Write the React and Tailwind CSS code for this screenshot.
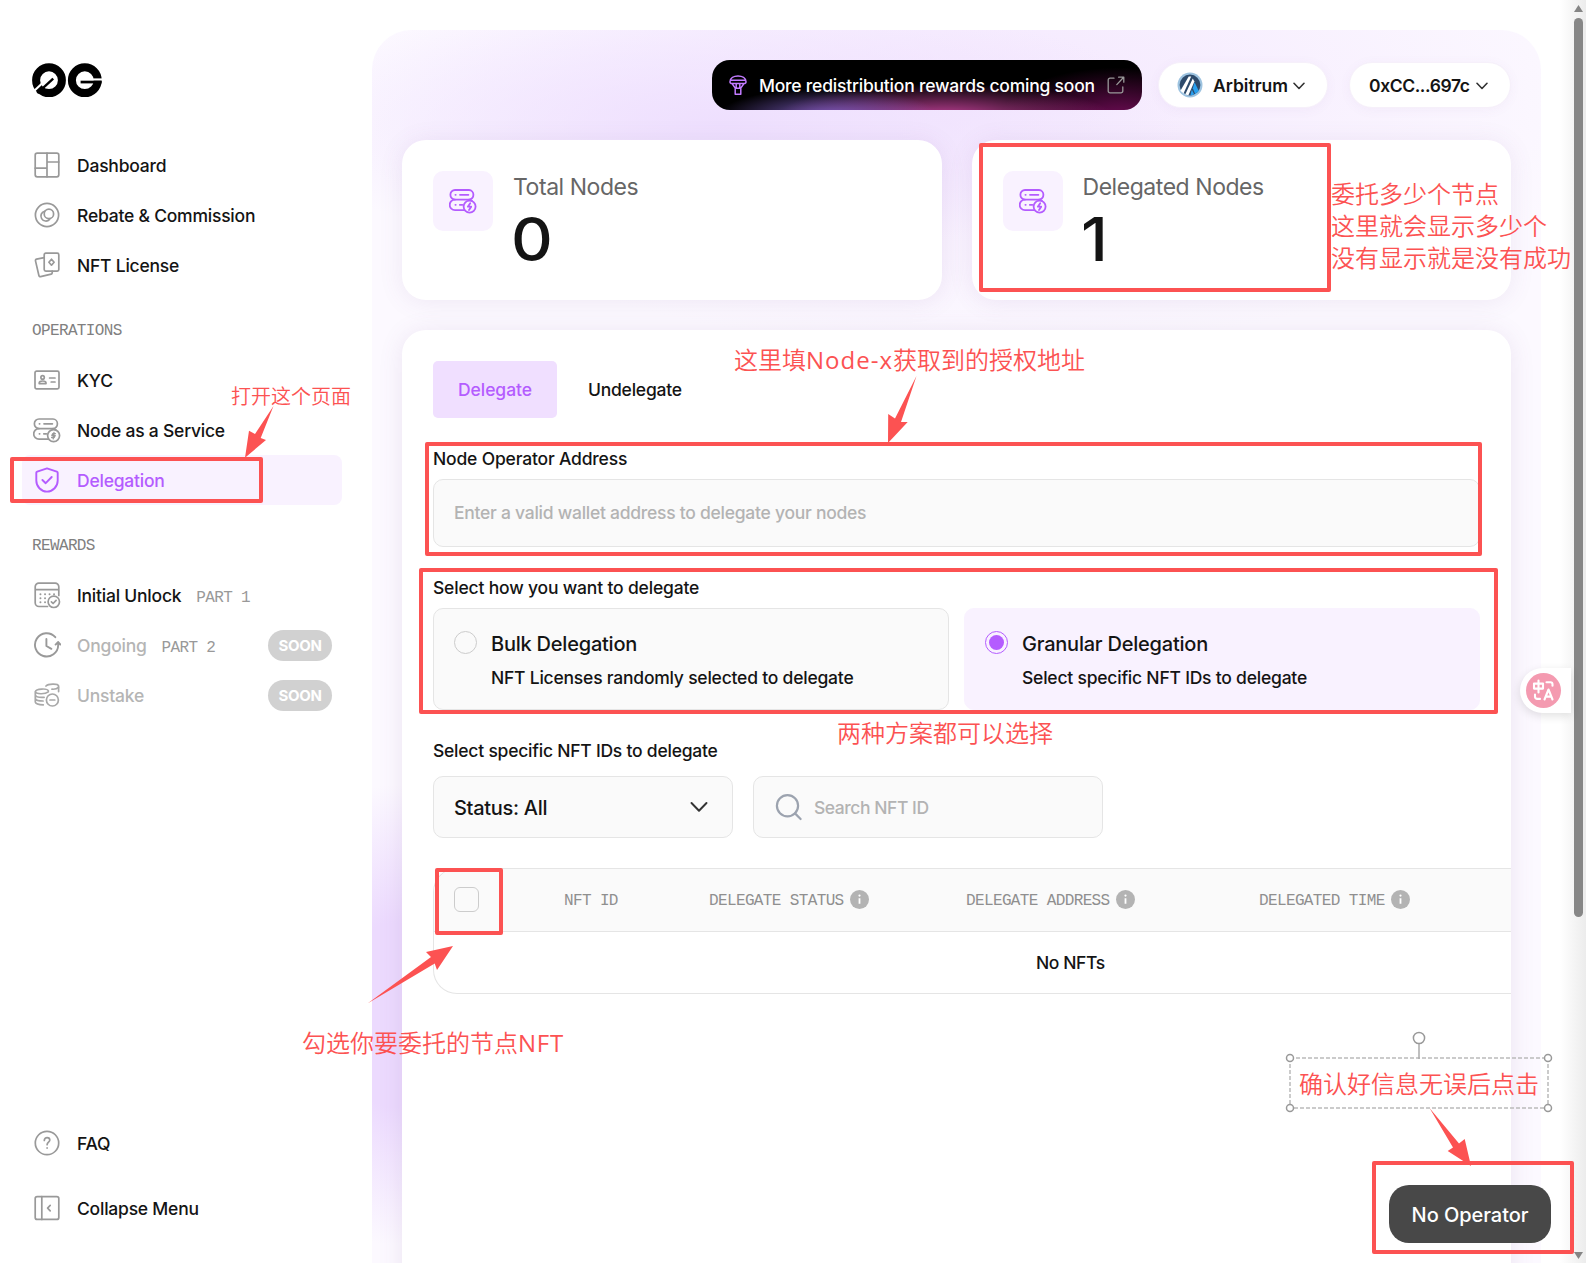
import React from "react";

const sv = { fill: "none", stroke: "currentColor", strokeWidth: 1.7, strokeLinecap: "round", strokeLinejoin: "round" };

function Logo() {
  return (
    <svg width="70" height="35" viewBox="0 0 70 35" className="block">
      <circle cx="17" cy="17.2" r="12.9" fill="none" stroke="#000" strokeWidth="8" />
      <path d="M1 29 10 20.400" stroke="#fff" strokeWidth="2.100" />
      <path d="M5.400 30.200 21.200 15.600" stroke="#000" strokeWidth="2.400" />
      <circle cx="52.8" cy="17.2" r="12.9" fill="none" stroke="#000" strokeWidth="8" />
      <rect x="61" y="15.400" width="9" height="2.300" fill="#fff" />
      <rect x="48.600" y="17.700" width="21" height="2.700" fill="#000" />
    </svg>
  );
}

function DashboardIcon() {
  return (
    <svg width="28" height="28" viewBox="0 0 28 28" {...sv}>
      <rect x="2.2" y="2.2" width="23.6" height="23.6" rx="2" />
      <path d="M14 2.2v23.6M2.2 17.2H14M14 11h11.8" />
    </svg>
  );
}
function RebateIcon() {
  return (
    <svg width="28" height="28" viewBox="0 0 28 28" {...sv}>
      <circle cx="14" cy="14" r="11.6" />
      <circle cx="15.9" cy="12.9" r="4.7" />
      <path d="M11.6 10.2a5 5 0 1 0 5 8.2" />
    </svg>
  );
}
function NftIcon() {
  return (
    <svg width="28" height="28" viewBox="0 0 28 28" {...sv}>
      <rect x="11.2" y="2.2" width="14.6" height="18" rx="1.6" />
      <path d="M11.2 6.6 3.6 8.2a1.4 1.4 0 0 0-1.1 1.7l3.4 14.6a1.4 1.4 0 0 0 1.7 1.1l10.6-2.5a1.3 1.3 0 0 0 1-1.3v-1.6" />
      <path d="M18.5 8.2l2.6 3-2.6 3-2.6-3z" />
    </svg>
  );
}
function KycIcon() {
  return (
    <svg width="28" height="28" viewBox="0 0 28 28" {...sv}>
      <rect x="2" y="5.2" width="24" height="17.6" rx="1.6" />
      <circle cx="9.6" cy="11.4" r="1.7" />
      <path d="M6.2 17.6v-.6c0-1.2 1.2-2 3.4-2s3.4.8 3.4 2v.6zM16.6 12h5.4M18.2 16h3.8" />
    </svg>
  );
}
function NodesIcon({ size = 28, bolt = false, w = 1.7 }) {
  return (
    <svg width={size} height={size} viewBox="0 0 28 28" {...sv} strokeWidth={w}>
      <path d="M6 12.6h14a4.6 4.6 0 0 0 4.4-4.8A4.7 4.7 0 0 0 20 3H6a4.7 4.7 0 0 0-4.6 4.8A4.6 4.6 0 0 0 6 12.6z" />
      <path d="M6 12.6a5.3 5.3 0 0 0 0 10.6h9.2M20 12.6c1.2.2 2 .5 2.8 1.2" />
      <path d="M6.4 7.8h.3M11 7.8h8.4M6.4 17.8h.3M10.8 17.8h2.6" />
      <circle cx="20.6" cy="19.6" r="6" />
      {bolt ? <path d="M21.2 16.2l-2.4 3.5h3.4l-2.2 3.4" /> : <path d="M22.4 17.6h-2.6l-1 1.9h3.4l-1 2h-2.6M21 16.4l-.8 6.4" strokeWidth="1.3" />}
    </svg>
  );
}
function ShieldIcon() {
  return (
    <svg width="28" height="28" viewBox="0 0 28 28" {...sv} strokeWidth="1.9">
      <path d="M14 2.4 23.8 5.6c.6.2.9.6.9 1.2v7.6c0 6-4.7 11.2-10.7 11.2S3.3 20.4 3.3 14.4V6.8c0-.6.3-1 .9-1.2z" />
      <path d="M9.4 14l3.3 3.2 6-6.2" />
    </svg>
  );
}
function CalendarIcon() {
  return (
    <svg width="28" height="28" viewBox="0 0 28 28" {...sv}>
      <path d="M14.5 25.500H6a3.800 3.800 0 0 1-3.800-3.800V5.800A3.600 3.600 0 0 1 6 2.200h16a3.600 3.600 0 0 1 3.800 3.600v8.600M2.200 8.600h23.600" />
      <path d="M7.400 13.300h.1M12 13.300h.1M16.500 13.300h.1M21 13.300h.1M7.400 17.300h.1M12 17.300h.1M7.400 21.300h.1M12 21.300h.1" strokeWidth="1.900" />
      <circle cx="20.800" cy="20.800" r="5.700" />
      <path d="M18.400 20.900l1.700 1.600 3-3.100" />
    </svg>
  );
}
function OngoingIcon() {
  return (
    <svg width="28" height="28" viewBox="0 0 28 28" {...sv} stroke="#999" strokeWidth="1.9">
      <path d="M22.300 6.200A11.600 11.600 0 1 0 25.200 14v-2.400M22.600 13.600l2.600-2.600 2.200 2.600" />
      <path d="M13.400 8v7l5 2.800" />
    </svg>
  );
}
function UnstakeIcon() {
  return (
    <svg width="28" height="28" viewBox="0 0 28 28" {...sv}>
      <path d="M13 5c2-2.200 12-2.600 12.600 0v5.600" />
      <path d="M2.300 10.600C3 7.600 14.500 7 15.400 10M2.300 10.600c.6 2.600 9.600 3 13 .2M19 8.200c3 .2 5.400-.6 6.400-1.800M2.300 10.600V21c.4 1.800 3.600 2.800 8 2.800M2.500 14.200c.5 1.500 4 2.400 8.600 2.100M2.500 17.700c.5 1.500 3.600 2.300 7.600 2.300" />
      <circle cx="19.400" cy="19" r="6" />
      <path d="M17 19h4.800" />
    </svg>
  );
}
function FaqIcon() {
  return (
    <svg width="28" height="28" viewBox="0 0 28 28" {...sv}>
      <circle cx="14" cy="14" r="11.700" />
      <path d="M11.300 11.400c0-1.700 1.200-2.800 2.800-2.800s2.700 1 2.700 2.500c0 2-2.700 2.200-2.700 4.600M14.100 18.900v.2" />
    </svg>
  );
}
function CollapseIcon() {
  return (
    <svg width="28" height="28" viewBox="0 0 28 28" {...sv}>
      <rect x="2.200" y="2.600" width="23.600" height="22.800" rx="2" />
      <path d="M8.800 2.600v22.800M17.200 11.400l-2.600 2.700 2.600 2.700" />
    </svg>
  );
}
function Chevron({ w = 12, h = 8, sw = 1.6 }) {
  return (
    <svg width={w} height={h} viewBox="0 0 12 8" fill="none" stroke="#333" strokeWidth={sw} strokeLinecap="round" strokeLinejoin="round" className="block shrink-0">
      <path d="M1 1.300 6 6.500 11 1.300" />
    </svg>
  );
}
function BalloonIcon() {
  return (
    <svg width="20" height="22" viewBox="0 0 20 22" fill="none" stroke="#c27bff" strokeWidth="1.500" strokeLinejoin="round" strokeLinecap="round" className="block shrink-0">
      <path d="M2 7.800C2.200 4 5.800 2 10 2s7.800 2 8 5.800c.1 1.300-1 1.800-2 1.800H4c-1 0-2.100-.5-2-1.800zM2.600 6.200h14.800M4 9.600l3.400 4.600M16 9.600l-3.400 4.600M8.200 9.600v4.600M11.800 9.600v4.600M7.200 14.200h5.600v6H7.200z" />
    </svg>
  );
}
function ExternalIcon() {
  return (
    <svg width="18" height="18" viewBox="0 0 18 18" fill="none" stroke="#999" strokeWidth="1.300" strokeLinecap="round" strokeLinejoin="round" className="block shrink-0">
      <path d="M7 2.200H3A1.800 1.800 0 0 0 1.200 4v11A1.800 1.800 0 0 0 3 16.800h11a1.800 1.800 0 0 0 1.800-1.800v-4M11.600 1.200h5.200v5M16.400 1.500 9.800 8.600" />
    </svg>
  );
}
function ArbitrumIcon() {
  return (
    <svg width="26" height="26" viewBox="0 0 26 26" className="block shrink-0">
      <circle cx="13" cy="13" r="12.500" fill="#9dc3e0" />
      <circle cx="13" cy="13" r="10.400" fill="#2d4a6b" />
      <path d="M11.700 4.500h2.500L6.500 21.400 3.400 18.800z" fill="#fff" />
      <path d="M15.800 6.400l1.600 3.200L11.400 23.200l-3.200-.8z" fill="#fff" />
      <path d="M17.600 10.200l4.200 8.700-3.600 3.100-2.400-5.800z" fill="#28a0f0" />
      <path d="M14.800 17.500l2.400 5-3.800.9z" fill="#28a0f0" />
    </svg>
  );
}

function NavItem({ icon, label, part, soon, active, muted }) {
  const tone = active ? "text-[#b45cff]" : muted ? "text-[#b5b5b5]" : "text-[#141414]";
  return (
    <div className={"flex h-[50px] w-80 items-center rounded-lg pl-[11px] pr-2.5 " + (active ? "bg-[#f9f2ff]" : "")}>
      <span className={"w-7 " + (active ? "text-[#b45cff]" : muted ? "text-[#a8a8a8]" : "text-[#999]")}>{icon}</span>
      <span className={"ml-4 whitespace-nowrap pt-0.5 text-[17.5px] font-medium tracking-[-0.22px] " + tone}>{label}</span>
      {part && <span className="ml-[15px] whitespace-pre pt-[5px] font-['Liberation_Mono'] text-[16px] tracking-[-0.65px] text-[#999]">{part}</span>}
      {soon && <span className="ml-auto flex h-[31px] w-16 items-center justify-center rounded-full bg-[#d1d1d1] pt-0.5 text-[15px] font-bold tracking-[-0.3px] text-white">SOON</span>}
    </div>
  );
}

function GroupLabel({ children }) {
  return <div className="h-[65px] pl-2.5 pt-[30px] font-['Liberation_Mono'] text-[16px] leading-[22px] tracking-[-0.63px] text-[#808080]">{children}</div>;
}

function Sidebar() {
  return (
    <aside className="flex w-[372px] shrink-0 flex-col pl-[22px] pt-[63px]">
      <div className="h-[77px] pl-2.5"><Logo /></div>
      <NavItem icon={<DashboardIcon />} label="Dashboard" />
      <NavItem icon={<RebateIcon />} label="Rebate & Commission" />
      <NavItem icon={<NftIcon />} label="NFT License" />
      <GroupLabel>OPERATIONS</GroupLabel>
      <NavItem icon={<KycIcon />} label="KYC" />
      <NavItem icon={<NodesIcon />} label="Node as a Service" />
      <NavItem icon={<ShieldIcon />} label="Delegation" active />
      <GroupLabel>REWARDS</GroupLabel>
      <NavItem icon={<CalendarIcon />} label="Initial Unlock" part="PART 1" />
      <NavItem icon={<OngoingIcon />} label="Ongoing" part="PART 2" soon muted />
      <NavItem icon={<UnstakeIcon />} label="Unstake" soon muted />
      <div className="mb-[30px] mt-auto flex flex-col gap-[15px]">
        <NavItem icon={<FaqIcon />} label="FAQ" />
        <NavItem icon={<CollapseIcon />} label="Collapse Menu" />
      </div>
    </aside>
  );
}

function TopBar() {
  return (
    <div className="flex h-[50px] items-center">
      <div className="ml-auto flex h-[50px] w-[430px] items-center rounded-[18px] bg-black bg-[radial-gradient(ellipse_110px_28px_at_27%_112%,#8f6be0cc,transparent),radial-gradient(ellipse_170px_34px_at_54%_115%,#e04bb0dd,transparent),radial-gradient(ellipse_120px_50px_at_95%_115%,#8a0f6acc,transparent)] pl-4">
        <BalloonIcon />
        <span className="ml-[11px] w-[337px] whitespace-nowrap pt-0.5 text-[17.5px] font-medium tracking-[-0.21px] text-white">More redistribution rewards coming soon</span>
        <span className="ml-[11px]"><ExternalIcon /></span>
      </div>
      <div className="ml-4 flex h-[46px] w-[170px] items-center rounded-full border border-[#f6f0fa] bg-white pl-[18px] shadow-[0_2px_12px_rgba(120,80,150,0.05)]">
        <ArbitrumIcon />
        <span className="ml-2.5 w-[76px] whitespace-nowrap pt-0.5 text-[17.5px] font-semibold text-[#141414]">Arbitrum</span>
        <span className="ml-1 pt-0.5"><Chevron /></span>
      </div>
      <div className="ml-[21px] flex h-[46px] w-[162px] items-center rounded-full border border-[#f6f0fa] bg-white pl-[19px] shadow-[0_2px_12px_rgba(120,80,150,0.05)]">
        <span className="w-[102px] whitespace-nowrap pt-0.5 text-[17.5px] font-semibold tracking-[-0.4px] text-[#141414]">0xCC...697c</span>
        <span className="ml-[5px] pt-0.5"><Chevron /></span>
      </div>
    </div>
  );
}

function StatCard({ label, value }) {
  return (
    <div className="flex h-40 flex-1 rounded-3xl bg-white pl-[31px] pt-[31px] shadow-[0_2px_24px_rgba(120,80,150,0.10)]">
      <div className="flex size-[60px] items-center justify-center rounded-[10px] bg-[#f9f2ff] text-[#b45cff]">
        <NodesIcon size={28} bolt w={1.8} />
      </div>
      <div className="ml-5">
        <div className="h-8 whitespace-nowrap text-[23px] leading-8 tracking-[-0.45px] text-[#666]">{label}</div>
        <div className="-ml-0.5 origin-left scale-x-108 text-[60px] font-medium leading-[72px] text-[#141414]">{value}</div>
      </div>
    </div>
  );
}

function Option({ title, text, checked }) {
  return (
    <div className={"flex h-[102px] flex-1 rounded-[10px] border pl-5 " + (checked ? "border-[#f9f2ff] bg-[#f9f2ff]" : "border-[#e5e5e5] bg-[#fafafa]")}>
      <div className={"mt-[22px] flex size-[23px] items-center justify-center rounded-full border " + (checked ? "border-[#b45cff]" : "border-[#ccc]")}>
        {checked && <div className="size-[15px] rounded-full bg-[#b45cff]" />}
      </div>
      <div className="ml-3.5 pt-5 text-[#141414]">
        <div className="h-[30px] whitespace-nowrap text-[20px] font-medium leading-[30px] tracking-[-0.22px]">{title}</div>
        <div className="mt-[7px] whitespace-nowrap text-[17.5px] font-medium leading-6 tracking-[-0.22px]">{text}</div>
      </div>
    </div>
  );
}

function Info() {
  return (
    <svg width="19" height="19" viewBox="0 0 19 19" className="block">
      <circle cx="9.500" cy="9.500" r="9.500" fill="#b3b3b3" />
      <path d="M9.500 8.200v5.600" stroke="#fff" strokeWidth="1.800" />
      <circle cx="9.500" cy="5.600" r="1.100" fill="#fff" />
    </svg>
  );
}

function Column({ label, width }) {
  return (
    <div className={"flex shrink-0 items-center gap-1.5 whitespace-pre " + width}>
      <span className="pt-0.5">{label}</span>
      {label !== "NFT ID" && <Info />}
    </div>
  );
}

function DelegateCard() {
  const label = "whitespace-nowrap text-[17.5px] font-medium leading-6 tracking-[-0.18px] text-[#141414]";
  return (
    <div className="mt-[30px] h-[960px] overflow-hidden rounded-t-3xl bg-white pl-[31px] pt-[31px] shadow-[0_2px_24px_rgba(120,80,150,0.12)]">
      <div className="flex h-[57px] items-center text-[17.5px] font-medium tracking-[-0.05px]">
        <div className="flex h-full w-[124px] items-center justify-center rounded-[5px] bg-[#f0dfff] pt-0.5 text-[#b45cff]">Delegate</div>
        <div className="ml-[31px] pt-0.5 tracking-[-0.23px] text-[#141414]">Undelegate</div>
      </div>
      <div className={"mt-[29px] " + label}>Node Operator Address</div>
      <div className="mr-[31px] mt-2 flex h-[68px] items-center rounded-[10px] border border-[#e5e5e5] bg-[#fafafa] pl-5 text-[17.5px] font-medium tracking-[-0.26px] text-[#b3b3b3]">Enter a valid wallet address to delegate your nodes</div>
      <div className={"mt-[29px] " + label}>Select how you want to delegate</div>
      <div className="mr-[31px] mt-2 flex gap-[15px]">
        <Option title="Bulk Delegation" text="NFT Licenses randomly selected to delegate" />
        <Option title="Granular Delegation" text="Select specific NFT IDs to delegate" checked />
      </div>
      <div className="mt-[29px] whitespace-nowrap text-[17.5px] font-medium leading-6 tracking-[-0.23px] text-[#141414]">Select specific NFT IDs to delegate</div>
      <div className="mt-[13px] flex gap-5">
        <div className="flex h-[62px] w-[300px] items-center justify-between rounded-[10px] border border-[#e5e5e5] bg-[#fafafa] pl-5 pr-6 text-[20px] font-medium tracking-[-0.3px] text-[#141414]">
          <span className="pt-0.5">Status: All</span>
          <Chevron w={18} h={12} sw={1.3} />
        </div>
        <div className="flex h-[62px] w-[350px] items-center rounded-[10px] border border-[#e5e5e5] bg-[#fafafa] pl-[21px] text-[17.5px] font-medium tracking-[-0.45px] text-[#b3b3b3]">
          <svg width="28" height="28" viewBox="0 0 28 28" fill="none" stroke="#9ca3af" strokeWidth="2.200" strokeLinecap="round" className="mr-[11px]">
            <circle cx="12.500" cy="12.800" r="10.600" />
            <path d="M20 20.400l5.600 5.600" />
          </svg>
          <span className="pt-0.5">Search NFT ID</span>
        </div>
      </div>
      <div className="mt-[30px] h-[126px] overflow-hidden rounded-l-3xl border-y border-l border-[#e5e5e5]">
        <div className="flex h-[63px] items-center border-b border-[#e5e5e5] bg-[#fafafa] pl-5 font-['Liberation_Mono'] text-[16px] tracking-[-0.63px] text-[#8f8f8f]">
          <div className="mb-0.5 size-[25px] rounded-md border border-[#ccc]" />
          <div className="flex pb-px pl-[85px]">
            <Column label="NFT ID" width="w-[145px]" />
            <Column label="DELEGATE STATUS" width="w-[257px]" />
            <Column label="DELEGATE ADDRESS" width="w-[293px]" />
            <Column label="DELEGATED TIME" width="w-[250px]" />
          </div>
        </div>
        <div className="flex h-[61px] items-center pl-[602px] pt-0.5 text-[17.5px] font-medium tracking-[-0.4px] text-[#141414]">No NFTs</div>
      </div>
    </div>
  );
}

const note = "absolute whitespace-nowrap font-['Noto_Sans_CJK_SC',sans-serif] font-[350] text-[#fc5252]";
const box = "absolute rounded-[2px] border-4 border-[#fc5252]";

function Annotations() {
  return (
    <div className="pointer-events-none absolute inset-0">
      <div className={box + " left-[10px] top-[457px] h-[46px] w-[253px]"} />
      <div className={box + " left-[979px] top-[143px] h-[149px] w-[352px]"} />
      <div className={box + " left-[425px] top-[442px] h-[114px] w-[1057px]"} />
      <div className={box + " left-[419px] top-[568px] h-[146px] w-[1079px]"} />
      <div className={box + " left-[435px] top-[868px] h-[67px] w-[68px]"} />
      <div className={box + " left-[1372px] top-[1161px] h-[93px] w-[202px]"} />
      <div className={note + " left-[231px] top-[382px] text-[20px] leading-7"}>打开这个页面</div>
      <div className={note + " left-[1331px] top-[177px] text-[24px] leading-8"}>委托多少个节点<br />这里就会显示多少个<br />没有显示就是没有成功</div>
      <div className={note + " left-[734px] top-[343px] text-[24px] leading-8"}>这里填<span className="font-['Open_Sans'] font-normal tracking-[1px]">Node-x</span>获取到的授权地址</div>
      <div className={note + " left-[837px] top-[716px] text-[24px] leading-8"}>两种方案都可以选择</div>
      <div className={note + " left-[302px] top-[1026px] text-[24px] leading-8"}>勾选你要委托的节点<span className="font-['Open_Sans'] font-normal tracking-[0.8px]">NFT</span></div>
      <div className={note + " left-[1299px] top-[1067px] text-[24px] leading-8"}>确认好信息无误后点击</div>
      <svg width="1586" height="1263" viewBox="0 0 1586 1263" className="absolute left-0 top-0">
        <g fill="#fc5252">
          <path d="M273.500 406 255 434l-6-3.300-4 27L266 440l-5.300-2z" />
          <path d="M916.500 376 895 418.500l-6.800-4.500-.2 29 19.700-21-6.700 0z" />
          <path d="M367.500 1003.500 431 957l-5-5 27-6-16 24-2.300-6.500z" />
          <path d="M1429.500 1108 1459 1143.500l5.700-4.500 6.300 27-23.300-15 5.300-3.500z" />
        </g>
        <g fill="none" stroke="#999" strokeWidth="1.500">
          <rect x="1290" y="1058" width="258" height="50" stroke="#bbb" strokeDasharray="4 2" />
          <path d="M1419 1044v15" stroke="#aaa" />
          <g fill="#fff">
            <circle cx="1419" cy="1038" r="5.600" />
            <circle cx="1290" cy="1058" r="3.500" />
            <circle cx="1548" cy="1058" r="3.500" />
            <circle cx="1290" cy="1108" r="3.500" />
            <circle cx="1548" cy="1108" r="3.500" />
          </g>
        </g>
      </svg>
    </div>
  );
}

function TranslateWidget() {
  return (
    <div className="absolute left-[1520px] top-[668px] flex h-[45px] w-[51px] items-center rounded-l-full bg-white pl-1.5 shadow-[0_3px_10px_rgba(0,0,0,0.12)]">
      <div className="flex size-[35px] items-center justify-center rounded-full bg-[#f49ab0]">
        <svg width="23" height="23" viewBox="0 0 23 23" fill="none" stroke="#fff" strokeWidth="2.100" strokeLinecap="round" strokeLinejoin="round">
          <path d="M2 4.600h9v5H2zM6.500 1.500v12M14.500 3.300h4a2 2 0 0 1 2 2v1.500M3 15.500v2.200a2.200 2.200 0 0 0 2.200 2.200H8M12.500 20.500 16.500 10.500l4 10M13.800 17.600h5.400" />
        </svg>
      </div>
    </div>
  );
}

export default function App() {
  return (
    <div className="relative flex h-[1263px] w-[1586px] overflow-hidden bg-white font-[Inter,sans-serif]">
      <Sidebar />
      <main className="mt-[30px] w-[1169px] shrink-0 overflow-hidden rounded-t-[40px] bg-[#fcf9ff] bg-[radial-gradient(ellipse_460px_130px_at_30%_95px,#eedffe,transparent),radial-gradient(ellipse_640px_260px_at_52%_60px,#f4e8fe,transparent),radial-gradient(ellipse_130px_230px_at_20px_985px,#ecdafe_40%,transparent)] px-[30px] pt-[30px]">
        <TopBar />
        <div className="mt-[30px] flex gap-[30px]">
          <StatCard label="Total Nodes" value="0" />
          <StatCard label="Delegated Nodes" value="1" />
        </div>
        <DelegateCard />
      </main>
      <div className="ml-auto flex w-[26px] flex-col items-end bg-gradient-to-r from-white to-[#ececec] pr-[3px] pt-[5px]">
        <svg width="9" height="7" viewBox="0 0 9 7" className="block"><path d="M4.500 0 9 7H0z" fill="#858585" /></svg>
        <div className="mt-1.5 h-[899px] w-[9px] rounded-full bg-[#878787]" />
        <svg width="9" height="7" viewBox="0 0 9 7" className="mb-[4px] mt-auto block"><path d="M4.500 7 9 0H0z" fill="#858585" /></svg>
      </div>
      <button className="absolute left-[1389px] top-[1185px] flex h-[58px] w-[162px] items-center justify-center rounded-[20px] bg-[#484848] pt-0.5 text-[20px] font-medium tracking-[-0.05px] text-white">No Operator</button>
      <TranslateWidget />
      <Annotations />
    </div>
  );
}
